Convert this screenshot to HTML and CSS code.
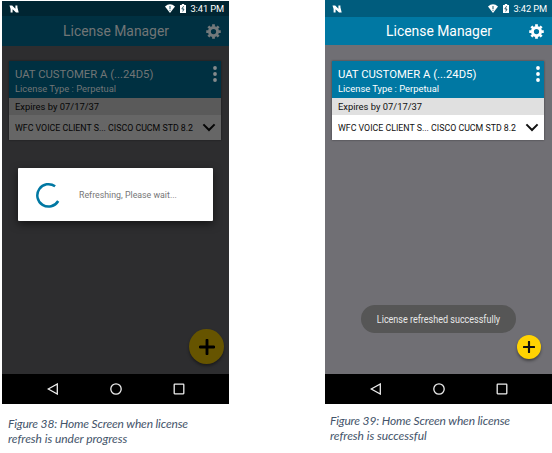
FILE: index.html
```html
<!DOCTYPE html>
<html lang="en">
<head>
<meta charset="utf-8">
<title>License Manager</title>
<link rel="stylesheet" href="styles.css">
</head>
<body>
<svg class="defs" width="0" height="0" aria-hidden="true">
  <symbol id="n" viewBox="0 0 10 8"><path d="M.5.6H3.200L6.400 3.800V.6h2V2.300L9.700 7.400H7L3.600 4.200V7.400H1.600V4z" fill="currentColor"/></symbol>
  <symbol id="wifi" viewBox="0 0 10 9"><path d="M0 2.400Q5-1.700 10 2.400L5 9z" fill="currentColor"/><path d="M5 2v3M5 5.800v1" stroke="#3d7385" stroke-width="1.200"/></symbol>
  <symbol id="battery" viewBox="0 0 6 9"><path d="M0 1h1.800V0h2.400v1H6v8H0z" fill="currentColor"/><path d="M3.600 2.200L1.800 5H4L2.700 7.500" fill="none" stroke="#174c5d" stroke-width=".9"/></symbol>
  <symbol id="gear" viewBox="0 0 24 24"><g fill="none" stroke="currentColor"><circle cx="12" cy="12" r="6.500" stroke-width="4.600"/><path d="M12 .4v4M12 19.600v4M.4 12h4M19.600 12h4M3.800 3.800l2.800 2.800M17.400 17.400l2.800 2.800M3.800 20.200l2.800-2.800M17.400 6.600l2.800-2.800" stroke-width="4.400"/></g></symbol>
  <symbol id="more" viewBox="0 0 4 16"><g fill="currentColor"><circle cx="2" cy="2" r="1.900"/><circle cx="2" cy="8" r="1.900"/><circle cx="2" cy="14" r="1.900"/></g></symbol>
  <symbol id="chevron" viewBox="0 0 14 9"><path d="M1.400 1.400L7 7l5.600-5.600" fill="none" stroke="currentColor" stroke-width="2"/></symbol>
  <symbol id="back" viewBox="0 0 12 12"><path d="M10.300 1v10L1.200 6z" fill="none" stroke="currentColor" stroke-width="1.300"/></symbol>
  <symbol id="home" viewBox="0 0 12 12"><circle cx="6" cy="6" r="5.200" fill="none" stroke="currentColor" stroke-width="1.300"/></symbol>
  <symbol id="recent" viewBox="0 0 12 12"><rect x="1.200" y="1.200" width="9.600" height="9.600" rx=".5" fill="none" stroke="currentColor" stroke-width="1.300"/></symbol>
  <symbol id="plus" viewBox="0 0 14 14"><path d="M7 1v12M1 7h12" stroke="currentColor" stroke-width="2.500" stroke-linecap="round"/></symbol>
</svg>

<main class="figures">
  <figure class="figure">
    <div class="phone dimmed">
      <div class="status"><svg class="n"><use href="#n"/></svg><span class="spacer"></span><svg class="wifi"><use href="#wifi"/></svg><svg class="battery"><use href="#battery"/></svg><span class="time">3:41 PM</span></div>
      <header class="bar"><h1>License Manager</h1><svg class="gear"><use href="#gear"/></svg></header>
      <div class="content">
        <section class="card">
          <div class="card-head">
            <div><div class="name">UAT CUSTOMER A (...24D5)</div><div class="type">License Type : Perpetual</div></div>
            <svg class="more"><use href="#more"/></svg>
          </div>
          <div class="expires">Expires by 07/17/37</div>
          <div class="product"><span>WFC VOICE CLIENT S... CISCO CUCM STD 8.2</span><svg class="chevron"><use href="#chevron"/></svg></div>
        </section>
        <div class="dialog">
          <svg class="spinner" viewBox="0 0 26 26"><path d="M20.100 4.300A11.200 11.200 0 1 0 23.200 19" fill="none" stroke="currentColor" stroke-width="2.500"/></svg>
          <span>Refreshing, Please wait...</span>
        </div>
        <div class="fab large"><svg><use href="#plus"/></svg></div>
      </div>
      <nav class="nav"><svg><use href="#back"/></svg><svg><use href="#home"/></svg><svg><use href="#recent"/></svg></nav>
    </div>
    <figcaption><span class="lead">Figure 38: Home Screen when license</span><br>refresh is under progress</figcaption>
  </figure>

  <figure class="figure second">
    <div class="phone">
      <div class="status"><svg class="n"><use href="#n"/></svg><span class="spacer"></span><svg class="wifi"><use href="#wifi"/></svg><svg class="battery"><use href="#battery"/></svg><span class="time">3:42 PM</span></div>
      <header class="bar"><h1>License Manager</h1><svg class="gear"><use href="#gear"/></svg></header>
      <div class="content">
        <section class="card">
          <div class="card-head">
            <div><div class="name">UAT CUSTOMER A (...24D5)</div><div class="type">License Type : Perpetual</div></div>
            <svg class="more"><use href="#more"/></svg>
          </div>
          <div class="expires">Expires by 07/17/37</div>
          <div class="product"><span>WFC VOICE CLIENT S... CISCO CUCM STD 8.2</span><svg class="chevron"><use href="#chevron"/></svg></div>
        </section>
        <div class="toast"><span>License refreshed successfully</span></div>
        <div class="fab"><svg><use href="#plus"/></svg></div>
      </div>
      <nav class="nav"><svg><use href="#back"/></svg><svg><use href="#home"/></svg><svg><use href="#recent"/></svg></nav>
    </div>
    <figcaption><span class="lead">Figure 39: Home Screen when license</span><br>refresh is successful</figcaption>
  </figure>
</main>
</body>
</html>
```

FILE: styles.css
```css
* { box-sizing: border-box; }
body { margin: 0; width: 552px; height: 453px; overflow: hidden; background: #fff; font-family: Roboto, "Liberation Sans", sans-serif; }
svg { display: block; flex: none; }
.defs { position: absolute; }
.figures { display: flex; justify-content: space-between; padding-left: 2px; }
.figure { margin: 0; width: 227px; padding-top: 1px; }
.figure.second { padding-top: 0; }

.phone {
  --status: #005c7d; --bar: #0078a3; --bg: #706f74; --title: #fff;
  --head: #0078a3; --sub: #e0e0e0; --row: #fff; --text: #111;
  --yellow: #ffd302; --icon: #fff; --plus: #111;
  display: flex; flex-direction: column; height: 403px; color: var(--text);
}
.second .phone { height: 404px; }
.phone.dimmed {
  --status: #002532; --bar: #003041; --bg: #2d2d2f; --title: #717576;
  --head: #003041; --sub: #5a5a5a; --row: #666; --text: #050505;
  --yellow: #665400; --icon: #73797b; --plus: #000;
}
.status { display: flex; align-items: center; height: 16px; padding: 0 5px 0 7px; background: var(--status); color: #fff; }
.second .status { height: 17px; padding-right: 5px; }
.dimmed .status { height: 15px; }
.spacer { flex: 1; }
.n { width: 10px; height: 8px; }
.wifi { width: 10px; height: 9px; margin-right: 5px; }
.battery { width: 6px; height: 9px; margin-right: 4px; }
.time { font-size: 9.3px; line-height: 15px; letter-spacing: -.1px; }
.bar { display: flex; align-items: center; justify-content: flex-end; height: 30px; padding-right: 8px; background: var(--bar); color: var(--title); }
.second .bar { height: 28px; }
h1 { margin: 0 37px 0 0; font-size: 13.9px; font-weight: 400; line-height: 18px; white-space: nowrap; }
.gear { width: 15px; height: 15px; color: var(--icon); }
.content { position: relative; flex: 1; background: var(--bg); padding: 15px 8px 0 7px; }
.card { height: 79px; background: var(--row); box-shadow: 0 0 2px rgba(0,0,0,.45); }
.second .content { padding-top: 16px; }
.card-head { display: flex; justify-content: space-between; height: 37px; padding: 6px 4px 0 6px; background: var(--head); color: var(--title); white-space: nowrap; }
.name { padding-top: 1px; font-size: 11.3px; line-height: 14px; }
.type { font-size: 9.4px; line-height: 14px; }
.more { width: 4px; height: 16px; margin-top: -1px; color: var(--icon); }
.dimmed .more { color: #858a8c; }
.expires { height: 17px; padding-left: 6px; background: var(--sub); font-size: 9.4px; line-height: 17px; }
.product { display: flex; align-items: center; justify-content: space-between; height: 25px; padding: 0 5px 0 6px; font-size: 8.8px; white-space: nowrap; }
.chevron { width: 14px; height: 9px; }
.dialog { position: absolute; left: 16px; top: 122px; width: 195px; height: 53px; display: flex; align-items: center; gap: 18px; padding-left: 17px; border-radius: 1px; background: #fff; box-shadow: 0 3px 8px rgba(0,0,0,.55); color: #777; font-size: 8.8px; white-space: nowrap; }
.spinner { width: 26px; height: 26px; color: #0078a3; }
.fab { position: absolute; right: 11px; bottom: 15px; width: 24px; height: 24px; display: grid; place-items: center; border-radius: 50%; background: var(--yellow); color: var(--plus); box-shadow: 0 2px 3px rgba(0,0,0,.4); }
.fab svg { width: 12px; height: 12px; }
.fab.large { right: 5px; bottom: 10px; width: 35px; height: 35px; }
.large svg { width: 16px; height: 16px; }
.toast { position: absolute; left: 36px; bottom: 41px; width: 155px; height: 28px; display: grid; place-items: center; border-radius: 14px; background: #565656; color: #e8e8e8; font-size: 10px; white-space: nowrap; }
.toast span { transform: scaleX(.9); }
.nav { display: flex; align-items: center; justify-content: space-between; height: 30px; padding: 0 44px 0 45px; background: #000; color: #eee; }
.nav svg { width: 12px; height: 12px; }
figcaption { padding: 12px 0 0 6px; color: #44546a; font: italic 12px/15px Lato, "Liberation Sans", sans-serif; letter-spacing: -.04px; white-space: nowrap; }
.lead { letter-spacing: -.15px; }
.second figcaption { padding: 9px 0 0 5px; }
```
